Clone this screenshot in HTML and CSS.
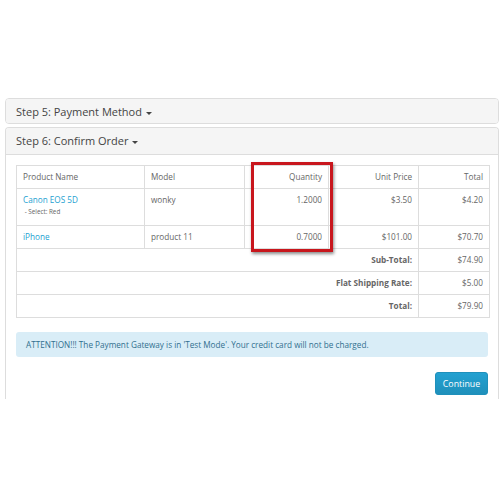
FILE: index.html
```html
<!DOCTYPE html>
<html lang="en">
<head>
    <meta charset="UTF-8">
    <meta name="viewport" content="width=device-width, initial-scale=1.0">
    <title>Checkout</title>
    <link rel="stylesheet" href="styles.css">
</head>
<body>

    <div class="checkout">
        <div class="panel">
            <div class="panel-heading">Step 5: Payment Method <span class="caret"></span></div>
        </div>

        <div class="panel panel-open">
            <div class="panel-heading">Step 6: Confirm Order <span class="caret"></span></div>
            <div class="panel-body">
                <div class="table-wrap">
                    <table class="order">
                        <colgroup>
                            <col style="width:128px">
                            <col style="width:100px">
                            <col style="width:84px">
                            <col style="width:90px">
                            <col style="width:71px">
                        </colgroup>
                        <thead>
                            <tr>
                                <td>Product Name</td>
                                <td>Model</td>
                                <td class="right">Quantity</td>
                                <td class="right">Unit Price</td>
                                <td class="right">Total</td>
                            </tr>
                        </thead>
                        <tbody>
                            <tr class="tall">
                                <td><a href="#">Canon EOS 5D</a><br><small>&nbsp;- Select: Red</small></td>
                                <td>wonky</td>
                                <td class="right">1.2000</td>
                                <td class="right">$3.50</td>
                                <td class="right">$4.20</td>
                            </tr>
                            <tr>
                                <td><a href="#">iPhone</a></td>
                                <td>product 11</td>
                                <td class="right">0.7000</td>
                                <td class="right">$101.00</td>
                                <td class="right">$70.70</td>
                            </tr>
                        </tbody>
                        <tfoot>
                            <tr>
                                <td colspan="4" class="right"><strong>Sub-Total:</strong></td>
                                <td class="right">$74.90</td>
                            </tr>
                            <tr>
                                <td colspan="4" class="right"><strong>Flat Shipping Rate:</strong></td>
                                <td class="right">$5.00</td>
                            </tr>
                            <tr>
                                <td colspan="4" class="right"><strong>Total:</strong></td>
                                <td class="right">$79.90</td>
                            </tr>
                        </tfoot>
                    </table>
                    <div class="highlight"></div>
                </div>

                <div class="alert">ATTENTION!!! The Payment Gateway is in 'Test Mode'. Your credit card will not be charged.</div>

                <div class="buttons">
                    <button class="btn-primary">Continue</button>
                </div>
            </div>
        </div>
    </div>

</body>
</html>
```

FILE: styles.css
```css
body {
    margin: 0;
    font-family: "Open Sans", Arial, sans-serif;
    background-color: #fff;
    color: #666;
}
.checkout {
    width: 494px;
    padding: 98px 0 0 5px;
}
.panel {
    border: 1px solid #ddd;
    border-radius: 4px;
    margin-bottom: 3px;
    background-color: #fff;
}
.panel-heading {
    background-color: #f5f5f5;
    color: #444;
    font-size: 11px;
    height: 24px;
    line-height: 25px;
    padding: 0 10px;
    border-radius: 3px;
}
.panel-open {
    border-bottom: none;
    border-radius: 4px 4px 0 0;
}
.panel-open .panel-heading {
    border-bottom: 1px solid #ddd;
    border-radius: 3px 3px 0 0;
    height: 26px;
    line-height: 26px;
}
.caret {
    display: inline-block;
    width: 0;
    height: 0;
    margin-left: 1px;
    vertical-align: middle;
    border-top: 3px solid #444;
    border-left: 3px solid transparent;
    border-right: 3px solid transparent;
}
.panel-body {
    padding: 10px 10px 0;
    height: 234px;
}
.table-wrap {
    position: relative;
}
.order {
    width: 473px;
    border-collapse: collapse;
    table-layout: fixed;
    font-size: 8.2px;
}
.order td {
    border: 1px solid #ddd;
    padding: 6px 6px;
    height: 10px;
    line-height: 10px;
    vertical-align: top;
}
.order tr.tall td {
    height: 24px;
}
.order .right {
    text-align: right;
}
.order a {
    color: #23a1d1;
    text-decoration: none;
}
.order small {
    font-size: 6.3px;
    line-height: 14px;
}
.order strong {
    color: #666;
}
.highlight {
    position: absolute;
    left: 235px;
    top: -3px;
    width: 76px;
    height: 84px;
    border: 3px solid #c8161d;
    box-shadow: 1px 2px 3px rgba(0, 0, 0, 0.45);
}
.alert {
    margin-top: 14px;
    background-color: #d9edf7;
    color: #31708f;
    font-size: 8.2px;
    height: 25px;
    line-height: 25px;
    padding: 0 10px;
    border-radius: 3px;
}
.buttons {
    display: flex;
    justify-content: flex-end;
    margin-top: 15px;
}
.btn-primary {
    font-family: "Open Sans", Arial, sans-serif;
    font-size: 8.8px;
    color: #fff;
    width: 53px;
    height: 23px;
    padding: 0;
    border: 1px solid #1f90bb;
    border-radius: 3px;
    background-color: #229ac8;
    background-image: linear-gradient(to bottom, #23a1d1, #1f90bb);
    cursor: pointer;
}
```
